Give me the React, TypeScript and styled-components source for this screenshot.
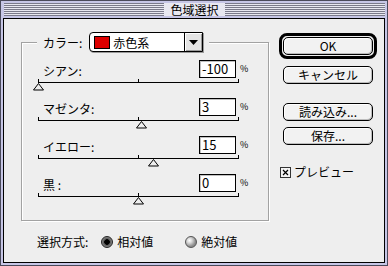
import styled, { createGlobalStyle } from "styled-components";

const GlobalStyle = createGlobalStyle`
  html, body {
    margin: 0;
    padding: 0;
    background: #eeeeee;
  }
  * {
    box-sizing: border-box;
  }
`

const FONT = `"Noto Sans CJK JP", "DejaVu Sans", sans-serif`

const Window = styled.div`
  width: 388px;
  height: 266px;
  display: flex;
  flex-direction: column;
  background: #c6c6e6;
  border: 1px solid #4a4a5a;
  padding: 0 2px 2px 2px;
  font-family: ${FONT};
  font-size: 12px;
  color: #000;
`

const TitleBar = styled.div`
  height: 17px;
  padding: 2px 0 2px 1px;
  display: flex;
`

const Stripes = styled.div`
  flex: 1;
  display: flex;
  justify-content: center;
  background: repeating-linear-gradient(
    to bottom,
    #7a7a8a 0px,
    #7a7a8a 1px,
    #e8e8f0 1px,
    #e8e8f0 2px
  );
`

const TitleText = styled.span`
  background: #e8e8f0;
  padding: 0 6px;
  line-height: 13px;
  font-size: 12px;
`

const Content = styled.div`
  flex: 1;
  display: flex;
  background: #eeeeee;
  border: 1px solid #000;
`

const LeftColumn = styled.div`
  display: flex;
  flex-direction: column;
  padding: 23px 0 0 17px;
`

const GroupBox = styled.div`
  position: relative;
  width: 248px;
  height: 179px;
  border: 1px solid #a2a2a2;
  box-shadow: 1px 1px 0 #ffffff, inset 1px 1px 0 #ffffff;
  padding: 17px 0 0 16px;
`

const Legend = styled.div`
  position: absolute;
  top: -11px;
  left: 15px;
  display: flex;
  align-items: center;
  gap: 7px;
  padding: 0 6px;
  background: #eeeeee;
`

const Dropdown = styled.div`
  width: 114px;
  height: 20px;
  display: flex;
  border: 1px solid #000;
  border-radius: 4px 0 0 4px;
  background: #fff;
  box-shadow: 1px 1px 0 #9a9a9a;
`

const DropValue = styled.div`
  flex: 1;
  display: flex;
  align-items: center;
  gap: 3px;
  padding-left: 4px;
`

const Swatch = styled.span`
  width: 16px;
  height: 13px;
  border: 1px solid #000;
  background: #dd0000;
`

const DropArrow = styled.div`
  width: 18px;
  display: flex;
  align-items: center;
  justify-content: center;
  border-left: 1px solid #000;
  background: #e4e4e4;
  box-shadow: inset 1px 1px 0 #ffffff, inset -1px -1px 0 #9a9a9a;
`

const Row = styled.div`
  width: 212px;
  height: 38px;
  display: flex;
  flex-direction: column;
`

const RowTop = styled.div`
  display: flex;
  align-items: flex-end;
  height: 18px;
`

const Label = styled.span`
  flex: 1;
  margin-left: 5px;
  line-height: 14px;
`

const ValueBox = styled.div`
  width: 37px;
  height: 18px;
  border: 1px solid #000;
  background: #fff;
  box-shadow: inset 1px 1px 0 #c0c0c0;
  padding-left: 2px;
  line-height: 16px;
  font-size: 13px;
`

const Percent = styled.span`
  width: 10px;
  margin-left: 4px;
  align-self: center;
  font-size: 9px;
  line-height: 10px;
`

const Track = styled.div`
  position: relative;
  width: 201px;
  height: 1px;
  margin-top: 4px;
  background: #000;
`

const Tick = styled.span<{ $at: number }>`
  position: absolute;
  left: ${p => p.$at}px;
  top: -3px;
  width: 1px;
  height: 3px;
  background: #000;
`

const Thumb = styled.svg`
  position: absolute;
  top: 1px;
  margin-left: -5px;
`

const ModeRow = styled.div`
  display: flex;
  align-items: center;
  margin: 14px 0 0 16px;
  line-height: 14px;
`

const ModeLabel = styled.span`
  margin-right: 13px;
`

const Radio = styled.span<{ $on?: boolean }>`
  width: 12px;
  height: 12px;
  border-radius: 50%;
  border: 1px solid ${p => (p.$on ? "#222" : "#555")};
  background: ${p =>
    p.$on
      ? "radial-gradient(circle at 50% 50%, #000 0 2.5px, #555 3px, #888 5px)"
      : "radial-gradient(circle at 35% 35%, #ffffff 0, #d8d8d8 2.5px, #8c8c8c 6px)"};
  margin-right: 4px;
`

const Option = styled.span`
  margin-right: 32px;
`

const RightColumn = styled.div`
  display: flex;
  flex-direction: column;
  padding: 14px 0 0 10px;
`

const DefaultRing = styled.div`
  width: 98px;
  height: 26px;
  border: 3px solid #000;
  border-radius: 8px;
  padding: 1px;
`

const Button = styled.div<{ $gap?: number }>`
  width: 90px;
  height: 18px;
  margin: ${p => p.$gap ?? 0}px 0 0 ${p => (p.$gap === undefined ? 0 : 4)}px;
  border: 1px solid #000;
  border-radius: 5px;
  background: #f2f2f2;
  box-shadow: inset 1px 1px 0 #ffffff, inset -1px -1px 0 #bdbdbd;
  display: flex;
  align-items: center;
  justify-content: center;
  line-height: 14px;
`

const CheckRow = styled.div`
  display: flex;
  align-items: center;
  margin: 20px 0 0 1px;
  gap: 3px;
  line-height: 14px;
`

const CheckBox = styled.svg`
  display: block;
`

interface Channel {
  name: string
  value: number
}

const channels: Channel[] = [
  { name: "シアン:", value: -100 },
  { name: "マゼンタ:", value: 3 },
  { name: "イエロー:", value: 15 },
  { name: "黒 :", value: 0 },
]

const SliderRow = ({ name, value }: Channel) => (
  <Row>
    <RowTop>
      <Label>{name}</Label>
      <ValueBox>{value}</ValueBox>
      <Percent>%</Percent>
    </RowTop>
    <Track>
      <Tick $at={0} />
      <Tick $at={100} />
      <Tick $at={200} />
      <Thumb width="11" height="8" viewBox="0 0 11 8" style={{ left: 100 + value }}>
        <polygon points="5.5,0.5 0.5,7 10.5,7" fill="#eeeeee" stroke="#000" strokeWidth="1" />
      </Thumb>
    </Track>
  </Row>
)

export default function App() {
  return (
    <>
      <GlobalStyle />
      <Window>
        <TitleBar>
          <Stripes>
            <TitleText>色域選択</TitleText>
          </Stripes>
        </TitleBar>
        <Content>
          <LeftColumn>
            <GroupBox>
              <Legend>
                <span>カラー:</span>
                <Dropdown>
                  <DropValue>
                    <Swatch />
                    <span>赤色系</span>
                  </DropValue>
                  <DropArrow>
                    <svg width="9" height="5" viewBox="0 0 9 5">
                      <polygon points="0,0 9,0 4.5,5" fill="#000" />
                    </svg>
                  </DropArrow>
                </Dropdown>
              </Legend>
              {channels.map(c => (
                <SliderRow key={c.name} {...c} />
              ))}
            </GroupBox>
            <ModeRow>
              <ModeLabel>選択方式:</ModeLabel>
              <Radio $on />
              <Option>相対値</Option>
              <Radio />
              <span>絶対値</span>
            </ModeRow>
          </LeftColumn>
          <RightColumn>
            <DefaultRing>
              <Button>OK</Button>
            </DefaultRing>
            <Button $gap={7}>キャンセル</Button>
            <Button $gap={19}>読み込み...</Button>
            <Button $gap={6}>保存...</Button>
            <CheckRow>
              <CheckBox width="11" height="11" viewBox="0 0 11 11">
                <rect x="0.5" y="0.5" width="10" height="10" fill="#f4f4f4" stroke="#333" />
                <path d="M3 3 L8 8 M8 3 L3 8" stroke="#000" strokeWidth="1.2" />
              </CheckBox>
              <span>プレビュー</span>
            </CheckRow>
          </RightColumn>
        </Content>
      </Window>
    </>
  )
}
